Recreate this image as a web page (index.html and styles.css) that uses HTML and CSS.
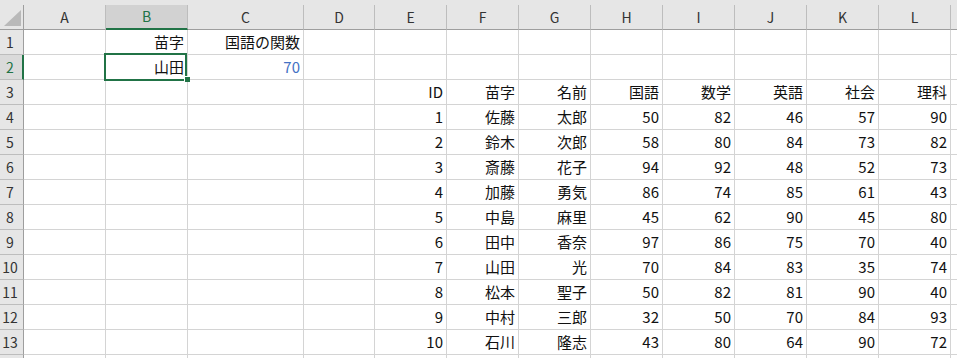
FILE: index.html
```html
<!DOCTYPE html>
<html lang="ja">
<head>
  <meta charset="UTF-8">
  <title>Sheet1</title>
  <link rel="stylesheet" href="styles.css">
</head>
<body>

<div class="top-strip"></div>

<div class="sheet" id="sheet">
  <div class="selection"></div>
  <div class="fill-handle"></div>
</div>

<script>
  // M and row 14 are only partly in view, so their labels stay blank
  const cols = ['A', 'B', 'C', 'D', 'E', 'F', 'G', 'H', 'I', 'J', 'K', 'L', ''];

  // values by row number, starting at column A
  const rows = {
    1: ['', '苗字', '国語の関数'],
    2: ['', '山田', '70'],
    3: ['', '', '', '', 'ID', '苗字', '名前', '国語', '数学', '英語', '社会', '理科'],
    4: ['', '', '', '', '1', '佐藤', '太郎', '50', '82', '46', '57', '90'],
    5: ['', '', '', '', '2', '鈴木', '次郎', '58', '80', '84', '73', '82'],
    6: ['', '', '', '', '3', '斎藤', '花子', '94', '92', '48', '52', '73'],
    7: ['', '', '', '', '4', '加藤', '勇気', '86', '74', '85', '61', '43'],
    8: ['', '', '', '', '5', '中島', '麻里', '45', '62', '90', '45', '80'],
    9: ['', '', '', '', '6', '田中', '香奈', '97', '86', '75', '70', '40'],
    10: ['', '', '', '', '7', '山田', '光', '70', '84', '83', '35', '74'],
    11: ['', '', '', '', '8', '松本', '聖子', '50', '82', '81', '90', '40'],
    12: ['', '', '', '', '9', '中村', '三郎', '32', '50', '70', '84', '93'],
    13: ['', '', '', '', '10', '石川', '隆志', '43', '80', '64', '90', '72']
  };

  const sheet = document.getElementById('sheet');

  function cell(cls, text) {
    const div = document.createElement('div');
    div.className = cls;
    div.textContent = text || '';
    sheet.appendChild(div);
    return div;
  }

  const corner = cell('corner');
  corner.innerHTML = '<span class="corner-mark"></span>';

  cols.forEach(c => {
    cell(c === 'B' ? 'col-head active' : 'col-head', c);
  });

  for (let r = 1; r <= 14; r++) {
    cell(r === 2 ? 'row-head active' : 'row-head', r < 14 ? String(r) : '');
    const values = rows[r] || [];
    cols.forEach((c, i) => {
      const cls = (r === 2 && i === 2) ? 'cell num-blue' : 'cell';
      cell(cls, values[i]);
    });
  }
</script>

</body>
</html>
```

FILE: styles.css
```css
body {
  margin: 0;
  background: #fff;
  overflow: hidden;
  font-family: "Noto Sans CJK JP", "Noto Sans", sans-serif;
}

.top-strip {
  height: 5px;
  background: #e6e6e6;
}

.sheet {
  position: relative;
  width: 957px;
  height: 353px;
  overflow: hidden;
  display: grid;
  grid-template-columns: 24px 82px 82px 116px 71px repeat(8, 72px) 72px;
  grid-auto-rows: 25px;
}

.corner,
.col-head,
.row-head,
.cell {
  box-sizing: border-box;
  border-right: 1px solid #d4d4d4;
  border-bottom: 1px solid #d4d4d4;
  white-space: nowrap;
  overflow: hidden;
}

.corner {
  background: #e6e6e6;
  border-right-color: #9e9e9e;
  border-bottom-color: #9e9e9e;
  display: flex;
  align-items: flex-end;
  justify-content: flex-end;
  padding: 0 2px 3px 0;
}

.corner-mark {
  width: 0;
  height: 0;
  border-left: 17px solid transparent;
  border-bottom: 16px solid #b9b9b9;
}

.col-head {
  background: #e6e6e6;
  border-right-color: #bdbdbd;
  border-bottom-color: #9e9e9e;
  text-align: center;
  font-size: 14px;
  line-height: 24px;
  color: #333;
}

.col-head.active {
  background: #d2d2d2;
  color: #217346;
  border-bottom: 2px solid #217346;
  line-height: 23px;
}

.row-head {
  background: #e6e6e6;
  border-right-color: #9e9e9e;
  border-bottom-color: #bdbdbd;
  text-align: center;
  padding-right: 3px;
  font-size: 14px;
  line-height: 24px;
  color: #333;
}

.row-head.active {
  background: #dadada;
  color: #217346;
  border-right: 2px solid #217346;
  padding-right: 2px;
}

.cell {
  text-align: right;
  padding-right: 3px;
  font-size: 15px;
  line-height: 24px;
  color: #111;
}

.num-blue {
  color: #4472c4;
}

.selection {
  position: absolute;
  left: 104px;
  top: 48px;
  width: 83px;
  height: 28px;
  box-sizing: border-box;
  border: 2px solid #217346;
  pointer-events: none;
}

.fill-handle {
  position: absolute;
  left: 184px;
  top: 71px;
  width: 5px;
  height: 5px;
  background: #217346;
  border: 1px solid #fff;
  border-width: 1px 0 0 1px;
}
```
